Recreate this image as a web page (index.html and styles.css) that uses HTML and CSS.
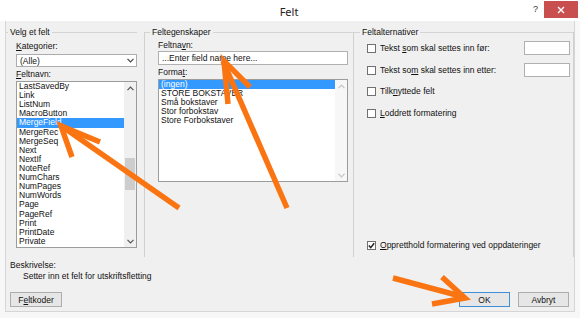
FILE: index.html
```html
<!DOCTYPE html>
<html lang="no">
<head>
    <meta charset="UTF-8">
    <title>Felt</title>
    <link rel="stylesheet" href="styles.css">
</head>
<body>
<div class="window">
    <div class="titlebar">
        <div class="side"></div>
        <div class="title">Felt</div>
        <div class="side right">
            <span class="help">?</span>
            <span class="close">
                <svg width="8" height="8" viewBox="0 0 8 8"><path d="M1 1L7 7M7 1L1 7" stroke="#fff" stroke-width="1.4"/></svg>
            </span>
        </div>
    </div>

    <div class="client">
        <div class="groups">
            <!-- Velg et felt -->
            <fieldset class="group pick">
                <legend>Velg et felt</legend>
                <div class="label first"><u>K</u>ategorier:</div>
                <div class="select">
                    <span class="value">(Alle)</span>
                    <span class="drop">
                        <svg width="7" height="5" viewBox="0 0 7 5"><path d="M0.5 0.8L3.5 3.8L6.5 0.8" fill="none" stroke="#444" stroke-width="1.2"/></svg>
                    </span>
                </div>
                <div class="label"><u>F</u>eltnavn:</div>
                <div class="listbox names">
                    <ul class="items">
                        <li>LastSavedBy</li>
                        <li>Link</li>
                        <li>ListNum</li>
                        <li>MacroButton</li>
                        <li class="sel">MergeField</li>
                        <li>MergeRec</li>
                        <li>MergeSeq</li>
                        <li>Next</li>
                        <li>NextIf</li>
                        <li>NoteRef</li>
                        <li>NumChars</li>
                        <li>NumPages</li>
                        <li>NumWords</li>
                        <li>Page</li>
                        <li>PageRef</li>
                        <li>Print</li>
                        <li>PrintDate</li>
                        <li>Private</li>
                    </ul>
                    <div class="vscroll">
                        <span class="arrow">
                            <svg width="7" height="5" viewBox="0 0 7 5"><path d="M0.5 4.2L3.5 1.2L6.5 4.2" fill="none" stroke="#555" stroke-width="1.2"/></svg>
                        </span>
                        <span class="track"><span class="thumb"></span></span>
                        <span class="arrow">
                            <svg width="7" height="5" viewBox="0 0 7 5"><path d="M0.5 0.8L3.5 3.8L6.5 0.8" fill="none" stroke="#555" stroke-width="1.2"/></svg>
                        </span>
                    </div>
                </div>
            </fieldset>

            <!-- Feltegenskaper -->
            <fieldset class="group props">
                <legend>Feltegenskaper</legend>
                <div class="label first">Feltna<u>v</u>n:</div>
                <div class="textbox wide">...Enter field name here...</div>
                <div class="label">Forma<u>t</u>:</div>
                <div class="listbox formats">
                    <ul class="items">
                        <li class="sel">(ingen)</li>
                        <li>STORE BOKSTAVER</li>
                        <li>Små bokstaver</li>
                        <li>Stor forbokstav</li>
                        <li>Store Forbokstaver</li>
                    </ul>
                    <div class="vscroll off">
                        <span class="arrow">
                            <svg width="7" height="5" viewBox="0 0 7 5"><path d="M0.5 4.2L3.5 1.2L6.5 4.2" fill="none" stroke="#c4c4c4" stroke-width="1.2"/></svg>
                        </span>
                        <span class="track"></span>
                        <span class="arrow">
                            <svg width="7" height="5" viewBox="0 0 7 5"><path d="M0.5 0.8L3.5 3.8L6.5 0.8" fill="none" stroke="#c4c4c4" stroke-width="1.2"/></svg>
                        </span>
                    </div>
                </div>
            </fieldset>

            <!-- Feltalternativer -->
            <fieldset class="group opts">
                <legend>Feltalternativer</legend>
                <div class="opt first">
                    <span class="check"></span>
                    <span>Tekst <u>s</u>om skal settes inn før:</span>
                    <span class="textbox small"></span>
                </div>
                <div class="opt">
                    <span class="check"></span>
                    <span>Tekst so<u>m</u> skal settes inn etter:</span>
                    <span class="textbox small"></span>
                </div>
                <div class="opt third">
                    <span class="check"></span>
                    <span>Tilk<u>n</u>yttede felt</span>
                </div>
                <div class="opt">
                    <span class="check"></span>
                    <span><u>L</u>oddrett formatering</span>
                </div>
                <div class="opt last">
                    <span class="check on">
                        <svg width="7" height="7" viewBox="0 0 7 7"><path d="M0.8 3.6L2.7 5.6L6.2 1.2" fill="none" stroke="#222" stroke-width="1.5"/></svg>
                    </span>
                    <span><u>O</u>ppretthold formatering ved oppdateringer</span>
                </div>
            </fieldset>
        </div>

        <div class="desc">
            <div class="label">Beskrivelse:</div>
            <div class="desc-text">Setter inn et felt for utskriftsfletting</div>
        </div>

        <div class="footer">
            <button class="btn">F<u>e</u>ltkoder</button>
            <div class="spacer"></div>
            <button class="btn default">OK</button>
            <button class="btn">Avbryt</button>
        </div>
    </div>

    <!-- oransje piler lagt over dialogen -->
    <svg class="arrows" width="580" height="318" viewBox="0 0 580 318">
        <g fill="none" stroke="#fa7412" stroke-width="5.5" stroke-linecap="butt" stroke-linejoin="miter">
            <path d="M60 125L179 208"/>
            <path d="M100 142L61 126L72 157"/>
            <path d="M223 61L287 208"/>
            <path d="M250 87L224 61L228 104"/>
            <path d="M393 278L464 297"/>
            <path d="M442 277L465 298L432 304"/>
        </g>
    </svg>
</div>
</body>
</html>
```

FILE: styles.css
```css
body {
    margin: 0;
    background-color: #f7f7f7;
    font-family: "Liberation Sans", Arial, sans-serif;
    font-size: 8.5px;
    color: #111;
}
.window {
    position: relative;
    width: 580px;
    height: 318px;
    overflow: hidden;
}
.titlebar {
    display: flex;
    height: 21px;
    background-color: #fff;
}
.side {
    flex: 1;
    display: flex;
    align-items: flex-start;
}
.side.right {
    justify-content: flex-end;
    padding-right: 2px;
}
.title {
    font-family: "Noto Sans", sans-serif;
    font-size: 11px;
    line-height: 23px;
    color: #222;
}
.help {
    font-size: 9px;
    line-height: 18px;
    margin-right: 6px;
    color: #333;
}
.close {
    display: flex;
    align-items: center;
    justify-content: center;
    width: 34px;
    height: 17px;
    margin-top: 1px;
    background-color: #c94f4f;
}
.client {
    display: flex;
    flex-direction: column;
    height: 291px;
    margin: 0 5px;
    padding-top: 6px;
    background-color: #f0f0f0;
    border: 1px solid #d6d6d6;
    border-top: none;
    box-sizing: border-box;
}
.groups {
    display: flex;
    height: 230px;
}
.group {
    margin: 0;
    padding: 0;
    border: none;
    border-top: 1px solid #d4d4d4;
    display: flex;
    flex-direction: column;
    box-sizing: border-box;
    min-width: 0;
}
.group legend {
    padding: 0 2px;
    line-height: 10px;
}
.pick {
    width: 131px;
}
.pick legend {
    margin-left: 2px;
}
.pick > .label,
.pick > .select,
.pick > .listbox {
    margin-left: 10px;
}
.props {
    width: 210px;
    margin-left: 7px;
    border-left: 1px solid #d0d0d0;
    border-right: 1px solid #d0d0d0;
}
.props legend {
    margin-left: 5px;
}
.props > .label,
.props > .textbox,
.props > .listbox {
    margin-left: 13px;
    margin-right: 5px;
}
.opts {
    flex: 1;
    margin-right: 0;
    border-right: 1px solid #d0d0d0;
    padding: 0 3px 5px 13px;
}
.opts legend {
    margin-left: -7px;
}
.label {
    line-height: 10px;
    margin-top: 2px;
}
.label.first {
    margin-top: 4px;
}
.props .label.first {
    margin-top: 3px;
}
.select {
    display: flex;
    align-items: center;
    height: 13px;
    margin-top: 3px;
    background-color: #fff;
    border: 1px solid #acacac;
    box-sizing: border-box;
}
.select .value {
    flex: 1;
    padding-left: 3px;
}
.select .drop {
    display: flex;
    align-items: center;
    justify-content: center;
    width: 12px;
    height: 100%;
}
.listbox {
    display: flex;
    margin-top: 2px;
    background-color: #fff;
    border: 1px solid #9c9c9c;
    box-sizing: border-box;
}
.names {
    height: 167px;
}
.formats {
    height: 103px;
}
.items {
    flex: 1;
    list-style: none;
    margin: 0;
    padding: 0;
}
.items li {
    height: 9.12px;
    line-height: 9.12px;
    padding-left: 2px;
    white-space: nowrap;
}
.items li.sel {
    background-color: #3399ff;
    color: #fff;
}
.vscroll {
    display: flex;
    flex-direction: column;
    width: 12px;
    background-color: #f0f0f0;
}
.vscroll.off {
    background-color: #f7f7f7;
}
.vscroll .arrow {
    display: flex;
    align-items: center;
    justify-content: center;
    height: 12px;
}
.vscroll .track {
    flex: 1;
    display: flex;
    flex-direction: column;
    align-items: center;
}
.vscroll .thumb {
    width: 10px;
    height: 32px;
    margin-top: 64px;
    background-color: #cdcdcd;
}
.textbox {
    display: block;
    background-color: #fff;
    border: 1px solid #b0b0b0;
    box-sizing: border-box;
}
.textbox.wide {
    height: 14px;
    margin-top: 1px;
    padding-left: 3px;
    line-height: 12px;
}
.textbox.small {
    width: 46px;
    height: 14px;
    margin-left: auto;
}
.opt {
    display: flex;
    align-items: center;
    height: 14px;
    margin-top: 8px;
}
.opt.first {
    margin-top: 4px;
}
.opt.third {
    margin-top: 7px;
}
.opt.last {
    margin-top: auto;
}
.check {
    display: flex;
    align-items: center;
    justify-content: center;
    width: 9px;
    height: 9px;
    margin-right: 4px;
    background-color: #fff;
    border: 1px solid #707070;
    box-sizing: border-box;
}
.desc {
    margin-top: 3px;
    padding-left: 4px;
}
.desc .label {
    margin-top: 0;
}
.desc-text {
    line-height: 10px;
    margin-top: 1px;
    padding-left: 13px;
}
.footer {
    display: flex;
    gap: 8px;
    margin-top: 11px;
    padding: 0 5px 0 4px;
}
.spacer {
    flex: 1;
}
.btn {
    width: 51px;
    height: 15px;
    padding: 0;
    font-family: inherit;
    font-size: 8.5px;
    color: #111;
    background-color: #e6e6e6;
    border: 1px solid #adadad;
}
.btn:first-child {
    width: 52px;
}
.btn.default {
    border-color: #3c8fd8;
}
.arrows {
    position: absolute;
    left: 0;
    top: 0;
    pointer-events: none;
}
```
